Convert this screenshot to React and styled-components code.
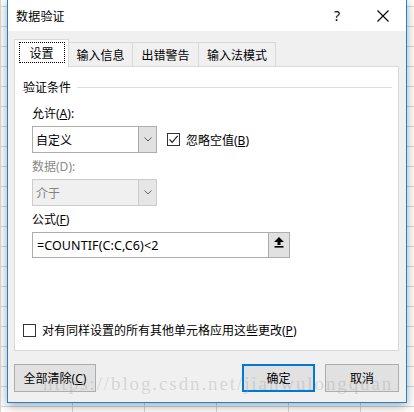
import React from 'react';
import styled, { createGlobalStyle } from 'styled-components';

const GlobalStyle = createGlobalStyle`
  html, body {
    margin: 0;
    padding: 0;
  }
  body {
    background-color: #ffffff;
    background-image:
      linear-gradient(to right, #d8d8d8 1px, transparent 1px),
      linear-gradient(to bottom, #d8d8d8 1px, transparent 1px);
    background-size: 72px 20px;
    background-position: 0 6px;
    font-family: 'Noto Sans', 'Noto Sans CJK SC', sans-serif;
    font-size: 12px;
    color: #000;
  }
`;

const Desk = styled.div`
  position: relative;
  width: 414px;
  height: 412px;
  padding-left: 7px;
  box-sizing: border-box;
  overflow: hidden;
`;

const Dialog = styled.div`
  width: 400px;
  height: 404px;
  margin-top: -1px;
  box-sizing: border-box;
  border: 1px solid #1883d7;
  background: #f0f0f0;
  box-shadow: 0 3px 10px rgba(0, 0, 0, 0.35);
  display: flex;
  flex-direction: column;
`;

const TitleBar = styled.div`
  height: 31px;
  background: #ffffff;
  display: flex;
  align-items: center;
  padding-left: 8px;
  font-size: 12px;
`;

const Title = styled.div`
  flex: 1;
  letter-spacing: 0.2px;
`;

const TitleButton = styled.div`
  width: 46px;
  height: 31px;
  display: flex;
  align-items: center;
  justify-content: center;
  font-size: 14px;
`;

const Body = styled.div`
  flex: 1;
  display: flex;
  flex-direction: column;
  padding: 9px 7px 9px 6px;
`;

const TabStrip = styled.div`
  display: flex;
  align-items: flex-end;
  height: 27px;
  position: relative;
  z-index: 1;
  margin-bottom: -1px;
`;

const Tab = styled.div`
  box-sizing: border-box;
  width: ${p => p.$w}px;
  height: ${p => (p.$active ? 28 : 25)}px;
  border: 1px solid #d9d9d9;
  border-left: ${p => (p.$first || p.$active ? '1px solid #d9d9d9' : 'none')};
  border-bottom: ${p => (p.$active ? 'none' : '1px solid #d9d9d9')};
  background: ${p => (p.$active ? '#ffffff' : '#f0f0f0')};
  display: flex;
  align-items: center;
  justify-content: center;
  padding-bottom: ${p => (p.$active ? 2 : 0)}px;
`;

const FocusBox = styled.span`
  display: inline-flex;
  align-items: center;
  justify-content: center;
  width: 46px;
  height: 21px;
  box-sizing: border-box;
  border: 1px dotted #000;
`;

const Panel = styled.div`
  height: 285px;
  box-sizing: border-box;
  background: #ffffff;
  border: 1px solid #d9d9d9;
  display: flex;
  flex-direction: column;
  padding: 0 6px 11px 8px;
`;

const GroupHeader = styled.div`
  margin-top: 12px;
  height: 16px;
  display: flex;
  align-items: center;
  gap: 6px;

  &::after {
    content: '';
    flex: 1;
    height: 1px;
    background: #dcdcdc;
  }
`;

const Field = styled.div`
  padding-left: 9px;
  display: flex;
  flex-direction: column;
`;

const Label = styled.div`
  margin-top: ${p => p.$mt}px;
  height: 16px;
  line-height: 16px;
  color: ${p => (p.$disabled ? '#8a8a8a' : '#000')};
`;

const Key = styled.span`
  text-decoration: ${p => (p.$plain ? 'none' : 'underline')};
  text-underline-offset: 1px;
`;

const Row = styled.div`
  margin-top: 4px;
  display: flex;
  align-items: center;
  gap: 10px;
`;

const Select = styled.div`
  width: 125px;
  height: 27px;
  box-sizing: border-box;
  border: 1px solid ${p => (p.$disabled ? '#cccccc' : '#adadad')};
  background: ${p => (p.$disabled ? '#f0f0f0' : '#ffffff')};
  color: ${p => (p.$disabled ? '#838383' : '#000')};
  display: flex;
`;

const SelectText = styled.div`
  flex: 1;
  display: flex;
  align-items: center;
  padding-left: 3px;
`;

const SelectArrow = styled.div`
  width: 17px;
  border-left: 1px solid ${p => (p.$disabled ? '#cccccc' : '#adadad')};
  background: ${p => (p.$disabled ? '#e6e6e6' : '#e1e1e1')};
  display: flex;
  align-items: center;
  justify-content: center;
`;

const Check = styled.label`
  display: flex;
  align-items: center;
  gap: 6px;
`;

const Box = styled.span`
  width: 13px;
  height: 13px;
  box-sizing: border-box;
  border: 1px solid #333;
  background: #fff;
  display: inline-flex;
  align-items: center;
  justify-content: center;
`;

const Formula = styled.div`
  margin-top: 4px;
  width: 258px;
  height: 26px;
  box-sizing: border-box;
  border: 1px solid #adadad;
  background: #fff;
  display: flex;
`;

const FormulaText = styled.div`
  flex: 1;
  display: flex;
  align-items: center;
  padding-left: 4px;
  font-size: 12.5px;
  letter-spacing: 0.1px;
`;

const RefButton = styled.div`
  width: 20px;
  background: #e1e1e1;
  border-left: 1px solid #adadad;
  display: flex;
  align-items: flex-start;
  justify-content: center;
  padding-top: 4px;
`;

const Spacer = styled.div`
  flex: 1;
`;

const Footer = styled.div`
  margin-top: 13px;
  display: flex;
  align-items: center;
  gap: 10px;
`;

const Button = styled.div`
  width: ${p => p.$w}px;
  height: 28px;
  box-sizing: border-box;
  border: ${p => (p.$primary ? '2px solid #0078d7' : '1px solid #adadad')};
  background: #e1e1e1;
  display: flex;
  align-items: center;
  justify-content: center;
`;

const Watermark = styled.div`
  position: absolute;
  left: 43px;
  top: 373px;
  font-family: 'Liberation Serif', serif;
  font-size: 19px;
  letter-spacing: 1.9px;
  color: rgba(160, 160, 160, 0.35);
  pointer-events: none;
  white-space: nowrap;
`;

const Chevron = ({ color = '#555' }) => (
  <svg width="8" height="5" viewBox="0 0 8 5">
    <path d="M0.5 0.5 L4 4 L7.5 0.5" fill="none" stroke={color} strokeWidth="1" />
  </svg>
);

const Tick = () => (
  <svg width="11" height="11" viewBox="0 0 11 11">
    <path d="M1.5 5.5 L4.2 8.3 L9.6 1.8" fill="none" stroke="#222" strokeWidth="1.2" />
  </svg>
);

export default function App() {
  return (
    <>
      <GlobalStyle />
      <Desk>
        <Dialog>
          <TitleBar>
            <Title>数据验证</Title>
            <TitleButton>?</TitleButton>
            <TitleButton>
              <svg width="12" height="12" viewBox="0 0 12 12">
                <path d="M0.5 0.5 L11.5 11.5 M11.5 0.5 L0.5 11.5" stroke="#000" strokeWidth="1.1" />
              </svg>
            </TitleButton>
          </TitleBar>
          <Body>
            <TabStrip>
              <Tab $w={55} $active $first>
                <FocusBox>设置</FocusBox>
              </Tab>
              <Tab $w={64}>输入信息</Tab>
              <Tab $w={66}>出错警告</Tab>
              <Tab $w={77}>输入法模式</Tab>
            </TabStrip>
            <Panel>
              <GroupHeader>验证条件</GroupHeader>
              <Field>
                <Label $mt={11}>
                  允许(<Key>A</Key>):
                </Label>
                <Row>
                  <Select>
                    <SelectText>自定义</SelectText>
                    <SelectArrow>
                      <Chevron />
                    </SelectArrow>
                  </Select>
                  <Check>
                    <Box>
                      <Tick />
                    </Box>
                    <span>
                      忽略空值(<Key>B</Key>)
                    </span>
                  </Check>
                </Row>
                <Label $mt={6} $disabled>
                  数据(<Key $plain>D</Key>):
                </Label>
                <Row>
                  <Select $disabled>
                    <SelectText>介于</SelectText>
                    <SelectArrow $disabled>
                      <Chevron color="#666" />
                    </SelectArrow>
                  </Select>
                </Row>
                <Label $mt={6}>
                  公式(<Key>F</Key>)
                </Label>
                <Formula>
                  <FormulaText>=COUNTIF(C:C,C6)&lt;2</FormulaText>
                  <RefButton>
                    <svg width="10" height="11" viewBox="0 0 10 11">
                      <path d="M5 0 L10 5 H6.5 V8 H3.5 V5 H0 Z" fill="#000" />
                      <rect x="0.5" y="9" width="9" height="1.6" fill="#000" />
                    </svg>
                  </RefButton>
                </Formula>
              </Field>
              <Spacer />
              <Check>
                <Box />
                <span>
                  对有同样设置的所有其他单元格应用这些更改(<Key>P</Key>)
                </span>
              </Check>
            </Panel>
            <Footer>
              <Button $w={82}>
                全部清除(<Key>C</Key>)
              </Button>
              <Spacer />
              <Button $w={73} $primary>
                确定
              </Button>
              <Button $w={74}>取消</Button>
            </Footer>
          </Body>
        </Dialog>
        <Watermark>https://blog.csdn.net/jianwulongquan</Watermark>
      </Desk>
    </>
  );
}
